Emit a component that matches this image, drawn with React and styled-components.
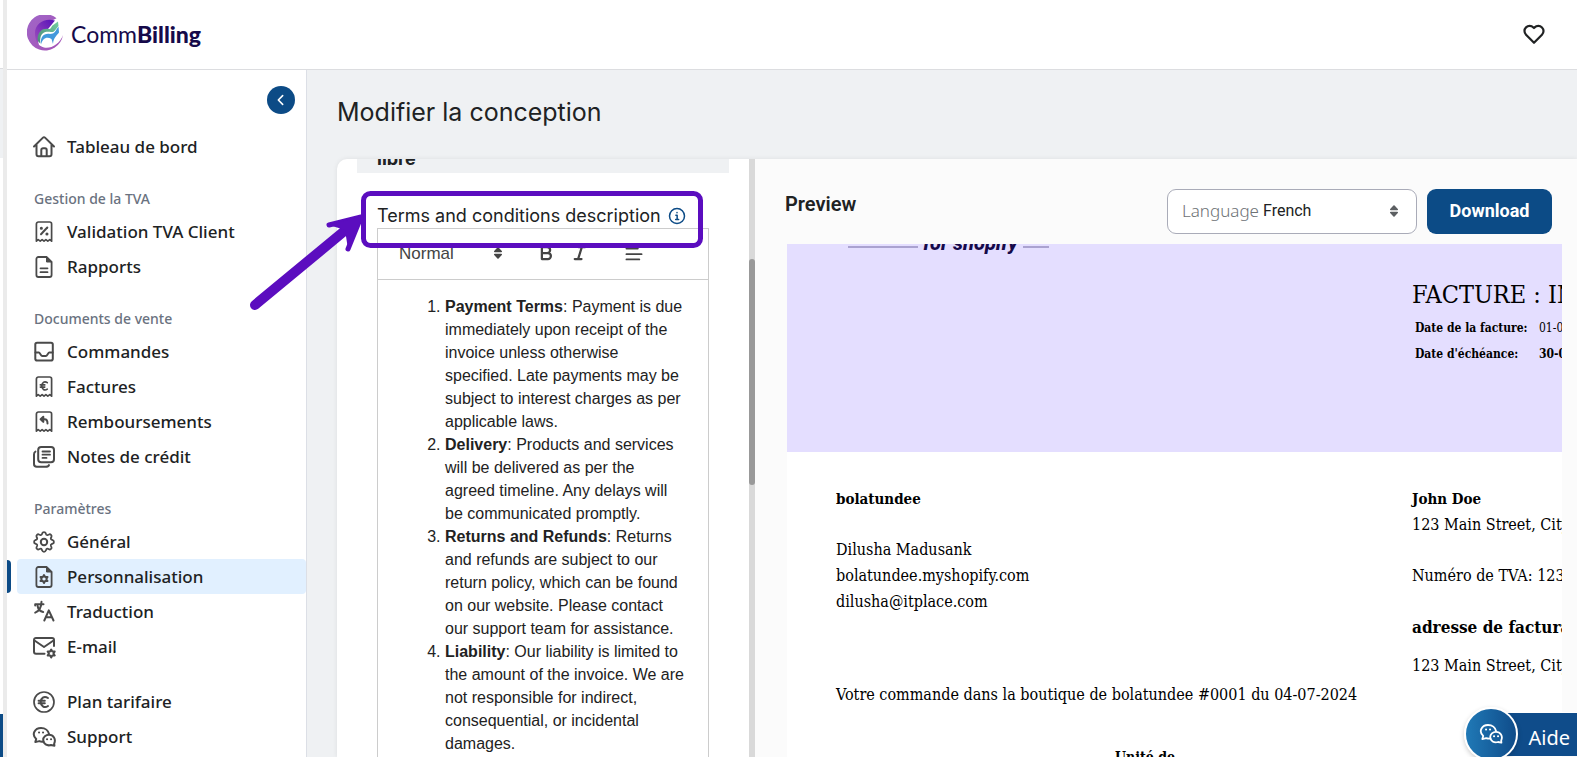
import React from "react"
import styled, { createGlobalStyle, css } from "styled-components"

const GlobalStyle = createGlobalStyle`
  :root {
    --primary: #0c4b86;
    --text: #202223;
    --icon: #4a4a4a;
    --surface: #eff1f3;
    --mark: #5b0dbf;
    --ui: "Noto Sans", "Open Sans", sans-serif;
  }

  *, *::before, *::after {
    box-sizing: border-box;
  }

  body {
    margin: 0;
    overflow: hidden;
    color: var(--text);
    font-family: var(--ui);
  }

  button, select {
    font: inherit;
    color: inherit;
    border: none;
    background: none;
    padding: 0;
  }
`

const Page = styled.div`
  position: relative;
  display: flex;
  height: 100vh;
  overflow: hidden;
`

/* sliver of the window behind this one */
const Behind = styled.div`
  flex: none;
  width: 7px;
  display: flex;
  flex-direction: column;
  border-right: 4px solid #ebebeb;
  background: #fff;
`

const BehindTop = styled.div`
  height: 69px;
  border-bottom: 1px solid #dcdde0;
`

const BehindHead = styled.div`
  height: 89px;
  background: var(--surface);
`

const BehindFoot = styled.div`
  height: 43px;
  margin-top: auto;
  background: var(--primary);
`

const Window = styled.div`
  flex: 1;
  min-width: 0;
  display: flex;
  flex-direction: column;
`

const Header = styled.header`
  flex: none;
  display: flex;
  align-items: center;
  justify-content: space-between;
  height: 70px;
  padding: 0 32px 2px 20px;
  border-bottom: 1px solid #dcdde0;
  background: #fff;
`

const Brand = styled.a`
  display: flex;
  align-items: center;
  gap: 7px;
  color: #160a4a;
  font-family: Lato, sans-serif;
  font-size: 23px;
  line-height: 28px;
  text-decoration: none;

  b {
    font-weight: 900;
  }
`

const IconButton = styled.button`
  display: flex;
`

const Body = styled.div`
  flex: 1;
  min-height: 0;
  display: flex;
`

const Sidebar = styled.nav`
  flex: none;
  display: flex;
  flex-direction: column;
  gap: 20px;
  width: 300px;
  padding-top: 16px;
  border-right: 1px solid #dcdfe6;
  background: #fff;
`

const Collapse = styled.button`
  align-self: flex-end;
  flex: none;
  display: flex;
  align-items: center;
  justify-content: center;
  width: 28px;
  height: 28px;
  margin: 0 11px -5px 0;
  border-radius: 50%;
  background: var(--primary);
  color: #fff;
`

const Group = styled.section`
  flex: none;
`

const GroupLabel = styled.h2`
  margin: 0;
  padding-left: 27px;
  color: #6a7280;
  font-size: 14px;
  font-weight: 500;
  line-height: 30px;
`

const NavList = styled.ul`
  margin: 0;
  padding: 0;
  list-style: none;
`

const NavItem = styled.li`
  display: flex;
  align-items: center;
  gap: 6px;

  &::before {
    content: "";
    width: 4px;
    height: 33px;
    border-radius: 0 4px 4px 0;
    background: ${({ $active }) => ($active ? "var(--primary)" : "none")};
  }
`

const NavLink = styled.a`
  flex: 1;
  display: flex;
  align-items: center;
  gap: 11px;
  height: 35px;
  padding-left: 15px;
  border-radius: 4px;
  color: var(--text);
  font-size: 17px;
  font-weight: 500;
  text-decoration: none;
  ${({ $active }) =>
    $active &&
    css`
      background: #e1f0ff;
    `}

  svg {
    flex: none;
    color: var(--icon);
  }
`

const Main = styled.main`
  flex: 1;
  min-width: 0;
  display: flex;
  flex-direction: column;
  padding-left: 30px;
  background: var(--surface);
`

const Title = styled.h1`
  flex: none;
  margin: 0;
  padding: 26px 0 31px;
  font-family: Inter, sans-serif;
  font-size: 25px;
  font-weight: 400;
  line-height: 32px;
`

const Card = styled.div`
  flex: 1;
  min-height: 0;
  display: flex;
  overflow: hidden;
  border-top-left-radius: 10px;
  background: #fff;
  box-shadow: 0 0 5px rgba(0, 0, 0, 0.08);
`

const Settings = styled.div`
  flex: none;
  display: flex;
  flex-direction: column;
  width: 412px;
  padding: 0 20px;
  overflow: hidden;
`

/* scrolled nearly out of view */
const SectionTitle = styled.h3`
  flex: none;
  display: flex;
  align-items: flex-end;
  height: 14px;
  margin: 0 0 31px;
  padding: 0 20px 4px;
  overflow: hidden;
  background: var(--surface);
  font-family: Inter, sans-serif;
  font-size: 18px;
  font-weight: 700;
  line-height: 20px;
`

const FieldLabel = styled.label`
  flex: none;
  display: flex;
  align-items: center;
  gap: 7px;
  padding-left: 20px;
  font-family: Inter, sans-serif;
  font-size: 18px;
  line-height: 24px;

  svg {
    color: var(--primary);
  }
`

const Editor = styled.div`
  flex: none;
  margin: 0 20px;
  border: 1px solid #ccc;
  font-family: "Liberation Sans", sans-serif;
  font-size: 16px;
`

const Toolbar = styled.div`
  display: flex;
  align-items: center;
  height: 51px;
  padding: 0 21px 2px;
  border-bottom: 1px solid #ccc;
  color: #444;
`

const Picker = styled.span`
  display: flex;
  align-items: center;
  width: 104px;
  margin-right: 34px;
  font-size: 17px;

  select {
    flex: 1;
    appearance: none;
  }
`

const Tool = styled.button`
  display: flex;
  justify-content: center;
  width: 18px;
  margin-right: ${({ $gap }) => $gap || 0}px;
`

const Terms = styled.ol`
  margin: 0;
  padding: 15px 20px 12px 67px;
  color: #222;
  line-height: 23px;
`

const Scrollbar = styled.div`
  flex: none;
  width: 6px;
  padding-top: 100px;
  background: #d9d9d9;
`

const Thumb = styled.div`
  height: 226px;
  border-radius: 3px;
  background: #999;
`

const Preview = styled.section`
  flex: 1;
  min-width: 0;
  display: flex;
  flex-direction: column;
  padding: 30px 15px 0 30px;
  background: #fbfbfb;
  font-family: Roboto, sans-serif;
`

const PreviewBar = styled.div`
  flex: none;
  display: flex;
  align-items: flex-start;
  gap: 10px;
  padding-right: 10px;

  h2 {
    margin: 0 auto 0 0;
    font-size: 20px;
    font-weight: 600;
    line-height: 30px;
  }
`

const LanguageBox = styled.div`
  display: flex;
  align-items: center;
  gap: 4px;
  width: 250px;
  height: 45px;
  padding: 0 17px 2px 14px;
  border: 1px solid #a9abb8;
  border-radius: 9px;
  background: #fff;

  label {
    color: #6d7175;
    font-family: var(--ui);
    font-size: 17px;
    font-weight: 300;
  }

  select {
    flex: 1;
    min-width: 0;
    appearance: none;
    font-size: 16px;
  }

  svg {
    color: #5c5f62;
  }
`

const Download = styled.button`
  width: 125px;
  height: 45px;
  padding-bottom: 2px;
  border-radius: 9px;
  background: var(--primary);
  color: #fff;
  font-size: 18px;
  font-weight: 700;
`

const Paper = styled.article`
  flex: 1;
  min-height: 0;
  margin: 10px 0 0 2px;
  overflow: hidden;
  background: #fff;
  color: #000;
  font-family: "DejaVu Serif Condensed", "DejaVu Serif", serif;
  font-size: 16px;
  line-height: 26px;
  white-space: nowrap;

  b {
    font-size: 15px;
  }
`

const Banner = styled.div`
  display: grid;
  grid-template-columns: 564px auto;
  align-items: start;
  height: 208px;
  padding-left: 61px;
  background: #e4deff;
`

const LogoTail = styled.div`
  display: flex;
  align-items: flex-end;
  gap: 5px;
  height: 10px;
  overflow: hidden;
  color: #160a4a;
  font-family: Roboto, sans-serif;
  font-size: 20px;
  font-style: italic;
  font-weight: 800;
  line-height: 22px;
`

const Rule = styled.i`
  width: ${({ $width }) => $width}px;
  height: 2px;
  margin-bottom: 6px;
  background: #aaa2d0;
`

const InvoiceTitle = styled.h2`
  margin: 0;
  padding: 35px 0 4px;
  font-size: 25px;
  font-weight: 400;
  line-height: 32px;
`

const Dates = styled.table`
  margin-left: 3px;
  border-collapse: collapse;
  font-size: 12px;

  th,
  td {
    height: 26px;
    padding: 0;
    text-align: left;
  }

  th {
    width: 124px;
  }

  tr + tr td {
    font-weight: 700;
  }
`

const Parties = styled.div`
  display: grid;
  grid-template-columns: 576px auto;
  padding: 34px 0 0 49px;

  p {
    margin: 0 0 25px;
  }

  h3 {
    margin: 0 0 13px;
    font-size: 17px;
    line-height: 26px;
  }
`

const OrderLine = styled.p`
  margin: 3px 0 0;
  padding-left: 49px;
`

const Columns = styled.div`
  padding: 36px 0 0 328px;
  font-size: 14px;
  font-weight: 700;
`

const Highlight = styled.svg`
  position: absolute;
  top: 180px;
  left: 240px;
  pointer-events: none;
`

const Help = styled.button`
  position: fixed;
  right: 0;
  bottom: -4px;
  display: flex;
  align-items: center;
  height: 54px;
`

const HelpIcon = styled.span`
  z-index: 1;
  display: flex;
  align-items: center;
  justify-content: center;
  width: 54px;
  height: 54px;
  margin-right: -26px;
  border: 2px solid #fff;
  border-radius: 50%;
  background: linear-gradient(90deg, #2079b6, #0f4c8a);
  box-shadow: 0 2px 5px rgba(0, 0, 0, 0.2);
  color: #fff;
`

const HelpText = styled.span`
  height: 44px;
  padding: 0 7px 0 36px;
  border-top: 1px solid #fff;
  background: #0f4c8a;
  color: #fff;
  font-size: 20px;
  line-height: 50px;
`

const Icon = ({ size = 24, width = 2, children }) => (
  <svg
    width={size}
    height={size}
    viewBox="0 0 24 24"
    fill="none"
    stroke="currentColor"
    strokeWidth={width}
    strokeLinecap="round"
    strokeLinejoin="round"
    aria-hidden="true"
  >
    {children}
  </svg>
)

const receipt =
  "M4.400 21.200V4a2 2 0 0 1 2-2h11.200a2 2 0 0 1 2 2v17.200l-1.800-1.600-2 1.600-1.900-1.600-1.900 1.600-1.900-1.600-1.900 1.600-2-1.600z"
const page = "M14.5 2H6.4a2 2 0 0 0-2 2v16a2 2 0 0 0 2 2h11.2a2 2 0 0 0 2-2V7z"
const smallCog =
  "M0-4 1.1-2.1 3.5-2 2.3 0 3.5 2 1.1 2.1 0 4-1.1 2.1-3.5 2-2.3 0-3.5-2-1.1-2.1z"

const icons = {
  home: (
    <>
      <path d="M2 11.500 11 2.600a1.400 1.400 0 0 1 2 0l9 8.900M4.500 10v9.200a2 2 0 0 0 2 2h11a2 2 0 0 0 2-2V10" />
      <path d="M9.300 21v-6a1.700 1.700 0 0 1 1.700-1.700h2a1.700 1.700 0 0 1 1.700 1.700v6" />
    </>
  ),
  vat: (
    <>
      <path d={receipt} strokeWidth="1.700" />
      <path d="m9 14.300 6.300-6.800" />
      <path d="M9.300 8.200h.1M14.900 13.900h.1" strokeWidth="3" />
    </>
  ),
  report: (
    <>
      <path d={page} strokeWidth="1.800" />
      <path d="M14.500 2.300V7h4.800z" fill="currentColor" strokeWidth="1" />
      <path d="M8.500 13.300h7M8.500 17.200h7" strokeWidth="1.800" />
    </>
  ),
  orders: (
    <>
      <rect x="3.300" y="2.800" width="17.500" height="17.700" rx="1.800" />
      <path d="M3.500 12.600h3.300c1.300 0 2 3.300 3.500 3.300h3.500c1.500 0 2.200-3.300 3.500-3.300h3.300" />
    </>
  ),
  invoice: (
    <>
      <path d={receipt} strokeWidth="1.700" />
      <path d="M15.300 7.700c-3-2.200-5.500.3-5.500 3.300s2.600 5.300 5.500 3.200M8.300 9.900h4.500M8.300 12.100h4.500" strokeWidth="1.600" />
    </>
  ),
  refund: (
    <>
      <path d={receipt} strokeWidth="1.700" />
      <path d="M8.600 9.300h4c2 0 2.900 1.200 2.900 4.200M11.300 6.800 8.600 9.300l2.700 2.600z" />
    </>
  ),
  notes: (
    <>
      <rect x="6.200" y="2" width="15.800" height="15.300" rx="3" />
      <path d="M10.500 6.500h7.500M10.500 9.700h7.500M10.500 12.900h4" strokeWidth="1.800" />
      <path d="M3.400 6.600C2 7.200 2 8.500 2 9.500V19c0 2 .8 2.800 2.800 2.800h8.700c1.600 0 3-.3 3.500-1.700" />
    </>
  ),
  settings: (
    <>
      <path
        strokeWidth="1.800"
        d="M10.200 3.300c.5-1.600 3.100-1.600 3.600 0l.4 1c.3.700 1 1 1.700.700l1-.5c1.500-.8 3.300 1 2.500 2.500l-.5 1c-.3.700 0 1.500.7 1.700l1.100.4c1.600.5 1.600 3.100 0 3.600l-1.100.4c-.7.300-1 1-.7 1.700l.5 1c.8 1.500-1 3.300-2.500 2.500l-1-.5c-.7-.3-1.500 0-1.700.7l-.4 1.100c-.5 1.600-3.100 1.600-3.600 0l-.4-1.100c-.3-.7-1-1-1.700-.7l-1 .5c-1.500.8-3.300-1-2.500-2.500l.5-1c.3-.7 0-1.500-.7-1.700l-1.100-.4c-1.600-.5-1.600-3.100 0-3.600l1.100-.4c.7-.3 1-1 .7-1.700l-.5-1C3.800 5.500 5.600 3.700 7.100 4.500l1 .5c.7.300 1.500 0 1.700-.7z"
      />
      <circle cx="12" cy="12" r="3.200" />
    </>
  ),
  design: (
    <>
      <path d={page} strokeWidth="1.800" />
      <path d="M14.500 2.300V7h4.800z" fill="currentColor" strokeWidth="1" />
      <path d={smallCog} transform="translate(12 14)" />
    </>
  ),
  translate: (
    <path d="M3.200 4.300h8.300M3.200 4.300v1.200M9.500 1.800c-.2 6-1.700 9.200-6.300 10.800M5.600 6c.6 3.500 2.300 5.300 5.600 6M12.300 20.500l4.500-10.200 4.700 10.200M13.800 17.300h6.100" />
  ),
  mail: (
    <>
      <path d="M12.500 18.700H4a2 2 0 0 1-2-2V4.900a2 2 0 0 1 2-2h16a2 2 0 0 1 2 2v6M2.500 5.500 12 12l9.500-6.500" />
      <path d={smallCog} transform="translate(19.200 18.500)" />
    </>
  ),
  pricing: (
    <>
      <circle cx="12" cy="12" r="10" strokeWidth="1.700" />
      <path d="M16 8c-4-2.700-7.300.3-7.300 4s3.500 6.700 7.300 4M6.600 10.800h6.200M6.600 13.300h6.200" />
    </>
  ),
  chat: (
    <>
      <path d="M11.500 16.500c-1.500.3-3 .1-4.300-.4l-3.900 1 .9-3.200C-.9 9.300 2.900 3 9 3c4.200 0 7.400 2.600 8 6" />
      <path d="M22.200 18.500c2-4.300-.8-8.700-5.200-8.700-3.200 0-5.800 2.300-5.800 5.200 0 3.800 3.900 6.300 7.800 5l3.400.7z" />
      <path d="M7 7.500h.1M11 7.500h.1M15 14.300h.1M19 14.300h.1" strokeWidth="2" />
    </>
  ),
}

const Sort = () => (
  <svg width="10" height="14" viewBox="0 0 12 16" fill="currentColor" aria-hidden="true">
    <path d="M2 7a.9.900 0 0 1-.6-1.500L5.300 1.500a1 1 0 0 1 1.400 0l3.900 4A.9.900 0 0 1 10 7zM2 9a.9.900 0 0 0-.6 1.500l3.900 4a1 1 0 0 0 1.400 0l3.900-4A.9.900 0 0 0 10 9z" />
  </svg>
)

const Logo = () => (
  <svg width="37" height="37" viewBox="0 0 37 37" aria-hidden="true">
    <defs>
      <linearGradient id="ring" x1="0" y1="0" x2="1" y2="1">
        <stop offset="0" stopColor="#a066c8" />
        <stop offset="1" stopColor="#a553b6" />
      </linearGradient>
      <linearGradient id="core" x1="0" y1="1" x2="1" y2="0">
        <stop offset="0" stopColor="#a352bd" />
        <stop offset="1" stopColor="#5510b8" />
      </linearGradient>
      <linearGradient id="wing" x1="0" y1="1" x2="1" y2="0">
        <stop offset="0" stopColor="#4a8878" />
        <stop offset="1" stopColor="#72cfa0" />
      </linearGradient>
    </defs>
    <path fill="url(#ring)" d="M29.500 3.200A18.200 18.200 0 1 0 36 20C33 29 24 34 17 32.500 9 30 8 21 11 13z" />
    <path fill="url(#core)" d="M28 5.500C17 2.500 8 9 8 18c0 6 2 10 5.500 13C10 21 14 15 21 14z" />
    <path fill="#fff" d="M12 30c-3-9 2-16 11-15l8-6 1.500 9-5 9c-4 5-11 6-15.500 3z" />
    <path fill="url(#wing)" d="M10.500 24c.5-8 5.500-11 11-10 3 0 2.500-2 4-3.500L31 6.500l.5 4.500c-3.500 4-4 6.500-7.500 6-6-1-9.500 1-10.500 5.500-.5 2.500-.5 4 0 6-2-1.500-3-2.500-3-4.500z" />
    <path fill="#4299dc" d="M14 29.500c-1-8 3-11.500 9-10.500 5 0 5.500-3.500 8.500-7.500l.5 6c-2.500 3.500-5.500 5-6 11.500L24.500 24c-5-3-9-.5-10.500 5.500z" />
  </svg>
)

const groups = [
  { items: [["home", "Tableau de bord"]] },
  {
    label: "Gestion de la TVA",
    items: [
      ["vat", "Validation TVA Client"],
      ["report", "Rapports"],
    ],
  },
  {
    label: "Documents de vente",
    items: [
      ["orders", "Commandes"],
      ["invoice", "Factures"],
      ["refund", "Remboursements"],
      ["notes", "Notes de crédit"],
    ],
  },
  {
    label: "Paramètres",
    items: [
      ["settings", "Général"],
      ["design", "Personnalisation", true],
      ["translate", "Traduction"],
      ["mail", "E-mail"],
    ],
  },
  {
    items: [
      ["pricing", "Plan tarifaire"],
      ["chat", "Support"],
    ],
  },
]

const terms = [
  [
    "Payment Terms",
    "Payment is due immediately upon receipt of the invoice unless otherwise specified. Late payments may be subject to interest charges as per applicable laws.",
  ],
  [
    "Delivery",
    "Products and services will be delivered as per the agreed timeline. Any delays will be communicated promptly.",
  ],
  [
    "Returns and Refunds",
    "Returns and refunds are subject to our return policy, which can be found on our website. Please contact our support team for assistance.",
  ],
  [
    "Liability",
    "Our liability is limited to the amount of the invoice. We are not responsible for indirect, consequential, or incidental damages.",
  ],
]

function SideNav() {
  return (
    <Sidebar>
      <Collapse aria-label="Réduire le menu">
        <Icon size={16} width={2.4}>
          <path d="m14.500 5.500-6.500 6.500 6.500 6.500" />
        </Icon>
      </Collapse>
      {groups.map(({ label, items }) => (
        <Group key={items[0][0]}>
          {label && <GroupLabel>{label}</GroupLabel>}
          <NavList>
            {items.map(([icon, text, active]) => (
              <NavItem key={icon} $active={active}>
                <NavLink href="#" $active={active}>
                  <Icon>{icons[icon]}</Icon>
                  {text}
                </NavLink>
              </NavItem>
            ))}
          </NavList>
        </Group>
      ))}
    </Sidebar>
  )
}

function TermsEditor() {
  return (
    <Settings>
      <SectionTitle>libre</SectionTitle>
      <FieldLabel id="terms-label">
        Terms and conditions description
        <Icon size={18} width={2}>
          <circle cx="12" cy="12" r="10" />
          <path d="M10.500 11h1.700v5.500M10.200 16.800h4M12 7.300v.2" />
        </Icon>
      </FieldLabel>
      <Editor>
        <Toolbar>
          <Picker>
            <select aria-label="Style">
              <option>Normal</option>
            </select>
            <Sort />
          </Picker>
          <Tool aria-label="Bold" $gap={16}>
            <Icon size={18} width={3}>
              <path d="M6.500 4h7a4 4 0 0 1 0 8h-7zM6.500 12h8a4 4 0 0 1 0 8h-8z" />
            </Icon>
          </Tool>
          <Tool aria-label="Italic" $gap={36}>
            <Icon size={18} width={3}>
              <path d="M10 4h9M5 20h9M14.500 4l-5 16" />
            </Icon>
          </Tool>
          <Tool aria-label="Align">
            <Icon size={20} width={2.6}>
              <path d="M2 6h15M2 13.500h20M2 20.500h17" />
            </Icon>
          </Tool>
        </Toolbar>
        <Terms aria-labelledby="terms-label">
          {terms.map(([name, text]) => (
            <li key={name}>
              <strong>{name}</strong>: {text}
            </li>
          ))}
        </Terms>
      </Editor>
    </Settings>
  )
}

function Invoice() {
  return (
    <Paper>
      <Banner>
        <LogoTail>
          <Rule $width={70} />
          for shopify
          <Rule $width={26} />
        </LogoTail>
        <div>
          <InvoiceTitle>FACTURE : INV-0001</InvoiceTitle>
          <Dates>
            <tbody>
              <tr>
                <th>Date de la facture:</th>
                <td>01-07-2024</td>
              </tr>
              <tr>
                <th>Date d'échéance:</th>
                <td>30-07-2024</td>
              </tr>
            </tbody>
          </Dates>
        </div>
      </Banner>
      <Parties>
        <div>
          <p>
            <b>bolatundee</b>
          </p>
          <p>
            Dilusha Madusank
            <br />
            bolatundee.myshopify.com
            <br />
            dilusha@itplace.com
          </p>
        </div>
        <div>
          <p>
            <b>John Doe</b>
            <br />
            123 Main Street, City
          </p>
          <p>Numéro de TVA: 123456</p>
          <h3>adresse de facturation</h3>
          123 Main Street, City
        </div>
      </Parties>
      <OrderLine>
        Votre commande dans la boutique de bolatundee #0001 du 04-07-2024
      </OrderLine>
      <Columns>Unité de</Columns>
    </Paper>
  )
}

function App() {
  return (
    <Page>
      <GlobalStyle />
      <Behind>
        <BehindTop />
        <BehindHead />
        <BehindFoot />
      </Behind>
      <Window>
        <Header>
          <Brand href="#">
            <Logo />
            <span>
              Comm<b>Billing</b>
            </span>
          </Brand>
          <IconButton aria-label="Favoris">
            <Icon size={22} width={2.4}>
              <path d="M12 21.500 3.300 12.800a5.600 5.600 0 0 1 0-8 5.600 5.600 0 0 1 8 0l.7.700.7-.7a5.600 5.600 0 0 1 8 0 5.600 5.600 0 0 1 0 8z" />
            </Icon>
          </IconButton>
        </Header>
        <Body>
          <SideNav />
          <Main>
            <Title>Modifier la conception</Title>
            <Card>
              <TermsEditor />
              <Scrollbar>
                <Thumb />
              </Scrollbar>
              <Preview>
                <PreviewBar>
                  <h2>Preview</h2>
                  <LanguageBox>
                    <label htmlFor="language">Language</label>
                    <select id="language">
                      <option>French</option>
                    </select>
                    <Sort />
                  </LanguageBox>
                  <Download>Download</Download>
                </PreviewBar>
                <Invoice />
              </Preview>
            </Card>
          </Main>
        </Body>
      </Window>
      <Highlight width="480" height="140" fill="none" stroke="var(--mark)" aria-hidden="true">
        <rect x="123.500" y="13.500" width="337" height="52" rx="7" strokeWidth="5" />
        <path d="M15 125 108 48" strokeWidth="10" strokeLinecap="round" />
        <path
          d="M121 37 89 45M121 37 108 69"
          strokeWidth="5"
          strokeLinecap="round"
        />
        <path d="M122 36 89 45l16 5 3 19z" fill="var(--mark)" stroke="none" />
      </Highlight>
      <Help>
        <HelpIcon>
          <Icon size={24} width={1.8}>
            {icons.chat}
          </Icon>
        </HelpIcon>
        <HelpText>Aide</HelpText>
      </Help>
    </Page>
  )
}

export default App
